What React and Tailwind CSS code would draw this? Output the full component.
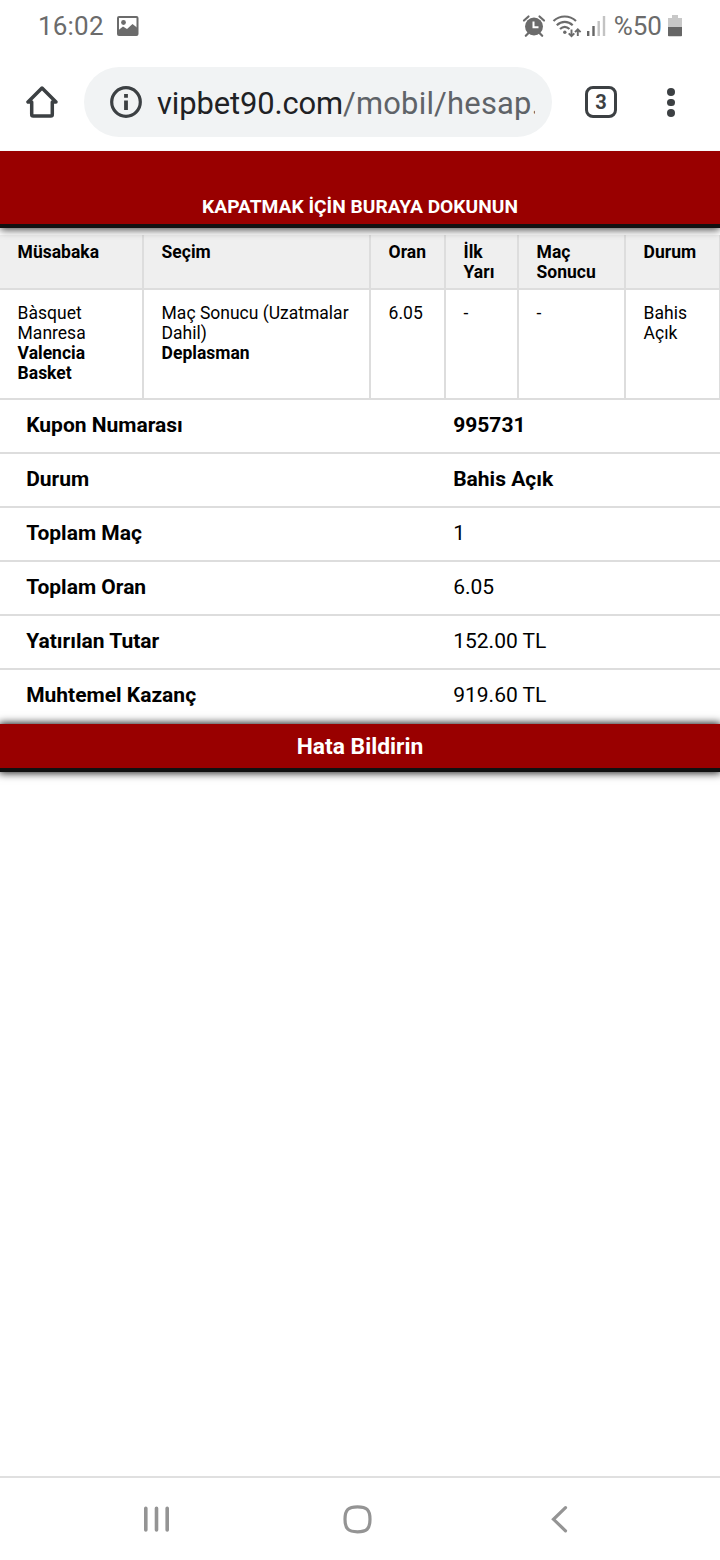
import React from "react";

const columns = [
  { title: "Müsabaka", lines: ["Bàsquet", "Manresa"], pick: ["Valencia", "Basket"] },
  { title: "Seçim", lines: ["Maç Sonucu (Uzatmalar", "Dahil)"], pick: ["Deplasman"] },
  { title: "Oran", lines: ["6.05"], pick: [] },
  { title: "İlk Yarı", lines: ["-"], pick: [] },
  { title: "Maç Sonucu", lines: ["-"], pick: [] },
  { title: "Durum", lines: ["Bahis", "Açık"], pick: [] },
];

const details = [
  { label: "Kupon Numarası", value: "995731", bold: true },
  { label: "Durum", value: "Bahis Açık", bold: true },
  { label: "Toplam Maç", value: "1" },
  { label: "Toplam Oran", value: "6.05" },
  { label: "Yatırılan Tutar", value: "152.00 TL" },
  { label: "Muhtemel Kazanç", value: "919.60 TL" },
];

const StatusBar = () => (
  <div className="flex h-[52px] items-center pl-[38px] pr-[38px] text-[#6b6b6b]">
    <span className="text-[26px] leading-[52px] tracking-[0.2px]">16:02</span>
    <svg className="ml-[13px] h-5 w-[22px]" viewBox="0 0 22 20" fill="none">
      <rect x="1" y="1" width="19.5" height="18" rx="1" stroke="currentColor" strokeWidth="2" />
      <circle cx="6.5" cy="6.5" r="2.4" fill="currentColor" />
      <path d="M1 14.500l5-4 4 2.500 5.500-5L20.500 12v7H1z" fill="currentColor" />
    </svg>

    <div className="ml-auto flex items-center">
      <svg className="h-6 w-6" viewBox="0 0 24 24" fill="none">
        <circle cx="12" cy="12.500" r="9" fill="currentColor" />
        <path d="M2 6.500L6.500 2.500M17.500 2.500L22 6.500" stroke="currentColor" strokeWidth="2.200" strokeLinecap="round" />
        <path d="M6.500 19L3.800 21.800M17.500 19L20.200 21.800" stroke="currentColor" strokeWidth="2.200" strokeLinecap="round" />
        <path d="M11.500 7.500v5.800H16.500" stroke="white" strokeWidth="2" />
      </svg>
      <svg className="ml-[6px] h-6 w-[30px]" viewBox="0 0 30 24" fill="none" stroke="currentColor" strokeWidth="2.200">
        <path d="M1.500 7C8 1 17.500 1 24 7" />
        <path d="M4.800 11.200C9.500 6.800 16 6.800 20.700 11.200" />
        <path d="M8 15C11 12.200 14.500 12.200 17.500 15" />
        <circle cx="12.800" cy="18.300" r="1.700" fill="currentColor" stroke="none" />
        <path d="M19.500 15.500v6.500M16.700 19.300l2.800 2.800 2.800-2.800" strokeWidth="1.900" />
        <path d="M25.800 22v-6.500M23 18.200l2.800-2.800 2.800 2.800" strokeWidth="1.900" />
      </svg>
      <svg className="ml-[5px] h-[22px] w-5" viewBox="0 0 20 22">
        <rect x="0" y="16" width="2.400" height="5" fill="#666666" />
        <rect x="5.300" y="11" width="2.400" height="10" fill="#666666" />
        <rect x="10.500" y="6" width="2.400" height="15" fill="#c3c3c3" />
        <rect x="15.800" y="1" width="2.400" height="20" fill="#c3c3c3" />
      </svg>
      <span className="ml-[7px] text-[26px] leading-[52px]">%50</span>
      <svg className="ml-[6px] h-[22px] w-[14px]" viewBox="0 0 14 22">
        <path d="M4 0h6v3h4v9H0V3h4z" fill="#c8c8c8" />
        <path d="M0 12h14v8.500a.8.8 0 0 1-.8.800H.8a.8.800 0 0 1-.8-.8z" fill="#666666" />
      </svg>
    </div>
  </div>
);

const BrowserBar = () => (
  <div className="flex h-[99px] items-start border-b border-[#fafafa] pt-[15px]">
    <svg className="ml-[26px] mt-[18px] h-[34px] w-8" viewBox="0 0 32 34" fill="none">
      <path d="M2 17H5.700V29.500Q5.700 31 7.200 31H24.800Q26.300 31 26.300 29.500V17H30L16 3Z" stroke="#3c4043" strokeWidth="3.500" strokeLinejoin="round" />
    </svg>
    <div className="ml-[26px] flex h-[70px] w-[468px] items-center rounded-full bg-[#f1f3f4] pl-[26px] pr-[17px]">
      <svg className="h-8 w-8 shrink-0" viewBox="0 0 32 32" fill="none">
        <circle cx="16" cy="16" r="14.300" stroke="#3c4043" strokeWidth="3.200" />
        <path d="M16 14.500v9.500M16 8v3.700" stroke="#3c4043" strokeWidth="3.800" />
      </svg>
      <div className="ml-[15px] overflow-hidden whitespace-nowrap pt-[3px] text-[30.900px] leading-[40px] tracking-[0.220px] text-[#5f6368]">
        <span className="tracking-[-0.120px] text-[#202124]">vipbet90.com</span>/mobil/hesap.
      </div>
    </div>
    <div className="ml-[33px] mt-[19px] flex size-8 items-center justify-center rounded-[8px] border-[3.500px] border-[#3c4043] text-[20px] leading-none font-bold text-[#3c4043]">
      3
    </div>
    <div className="ml-[50px] mt-[21px] flex flex-col gap-[3px]">
      <span className="size-[7.500px] rounded-full bg-[#3c4043]" />
      <span className="size-[7.500px] rounded-full bg-[#3c4043]" />
      <span className="size-[7.500px] rounded-full bg-[#3c4043]" />
    </div>
  </div>
);

const BetTable = () => (
  <div className="mt-[7px] grid w-[721px] grid-cols-[144px_227px_75px_73px_107px_95px] text-[17.500px] leading-5">
    {columns.map((col) => (
      <div key={col.title} className="h-[55px] border-r-2 border-b-2 border-[#dddddd] bg-[#efefef] pt-[7px] pr-2 pl-[17.600px] font-bold">
        {col.title}
      </div>
    ))}
    {columns.map((col) => (
      <div key={col.title} className="h-[110px] whitespace-nowrap border-r-2 border-b-2 border-[#dddddd] pt-[13px] pl-[17.600px]">
        {col.lines.map((line) => (
          <p key={line}>{line}</p>
        ))}
        {col.pick.map((line) => (
          <p key={line} className="font-bold">{line}</p>
        ))}
      </div>
    ))}
  </div>
);

const NavBar = () => (
  <div className="mt-auto h-[84px] border-t-2 border-[#e0e0e0] text-[#949494]">
    <div className="flex items-center pt-[26px]">
      <svg className="ml-[143px] h-[30px] w-[28px]" viewBox="0 0 28 30" fill="none" stroke="currentColor" strokeWidth="3.600" strokeLinecap="round">
        <path d="M2.800 4.200v21.800M13.500 4.200v21.800M24.200 4.200v21.800" />
      </svg>
      <svg className="ml-[171px] h-[30px] w-[30px]" viewBox="0 0 30 30" fill="none" stroke="currentColor" strokeWidth="3.200">
        <path d="M15.500 2.800C24.500 2.800 28 5.500 28 15.300S24.500 27.800 15.500 27.800S3 25 3 15.300S6.500 2.800 15.500 2.800Z" />
      </svg>
      <svg className="ml-[178px] h-[30px] w-[20px]" viewBox="0 0 20 30" fill="none" stroke="currentColor" strokeWidth="3.200" strokeLinecap="round">
        <path d="M15.500 3.700L3.500 15.300L15.500 26.800" />
      </svg>
    </div>
  </div>
);

const App = () => {
  return (
    <div className="flex h-[1560px] w-[720px] flex-col overflow-hidden bg-white font-['Roboto',sans-serif] text-black">
      <StatusBar />
      <BrowserBar />
      <button className="relative h-[77px] w-full shrink-0 border-b-4 border-[#111111] bg-[#990000] pt-[38px] text-center text-[19.200px] leading-[35px] font-bold text-white shadow-[0_2px_8px_rgba(0,0,0,0.7)] [clip-path:inset(0_0_-12px_0)]">
        KAPATMAK İÇİN BURAYA DOKUNUN
      </button>
      <BetTable />
      <div className="text-[21px]">
        {details.map((row) => (
          <div key={row.label} className="flex h-[54px] items-center border-b-2 border-[#dddddd] pb-px pl-[26.200px] last:border-transparent">
            <span className="w-[427px] font-bold">{row.label}</span>
            <span className={row.bold ? "font-bold" : ""}>{row.value}</span>
          </div>
        ))}
      </div>
      <button className="h-12 w-full shrink-0 border-b-4 border-[#111111] bg-[#990000] pt-px text-[22.800px] leading-[43px] font-bold text-white shadow-[0_0_8px_1px_rgba(0,0,0,0.9)]">
        Hata Bildirin
      </button>
      <NavBar />
    </div>
  );
};

export default App;
